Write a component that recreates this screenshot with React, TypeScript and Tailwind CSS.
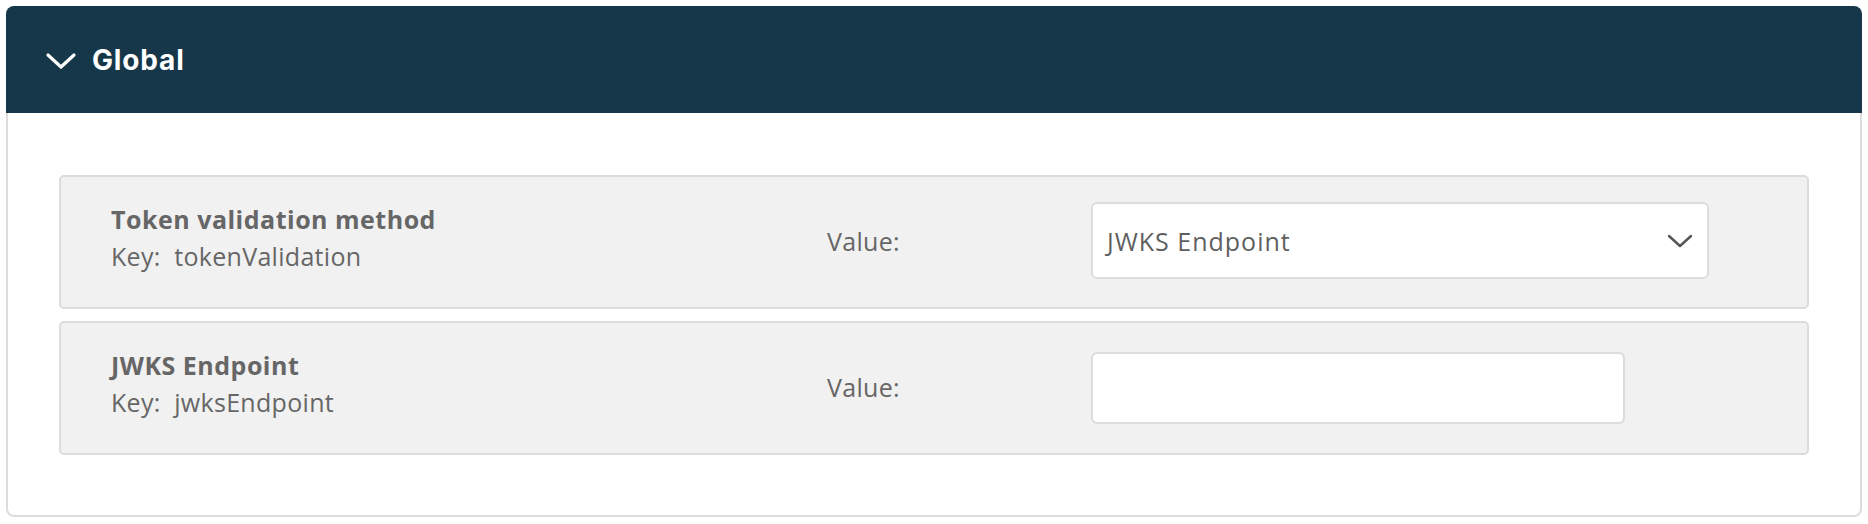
import React from "react";

function Row({ title, keyName, children }: { title: string; keyName: string; children: React.ReactNode }) {
  return (
    <div className="flex h-[134px] items-center rounded-[5px] border-2 border-[#dcdcdc] bg-[#f1f1f1] pl-[50px]">
      <div className="flex w-[716px] flex-col pb-[10px]">
        <div className="text-[25px] font-bold leading-[34px] tracking-[0.5px] text-[#666666]">{title}</div>
        <div className="mt-[3px] text-[25px] leading-[34px] tracking-[0.3px] text-[#666666]">
          Key:&nbsp; {keyName}
        </div>
      </div>
      <div className="w-[264px] pb-[3px] text-[25px] leading-[34px] tracking-[0.3px] text-[#666666]">Value:</div>
      {children}
    </div>
  );
}

export default function App() {
  return (
    <div
      className="bg-white p-[6px]"
      style={{ fontFamily: '"Open Sans", "Noto Sans", sans-serif' }}
    >
      <div className="flex h-[107px] items-center gap-[15px] rounded-t-[8px] bg-[#16374a] pl-[39px]">
        <svg width="32" height="18" viewBox="0 0 32 18" fill="none" className="mt-[2px]">
          <path d="M3 3 L16 15 L29 3" stroke="#ffffff" strokeWidth="3.2" strokeLinecap="round" strokeLinejoin="round" />
        </svg>
        <div
          className="text-[28px] font-bold tracking-[0.03em] text-white"
          style={{ fontFamily: 'Inter, "Noto Sans", sans-serif' }}
        >
          Global
        </div>
      </div>
      <div className="flex flex-col gap-[12px] rounded-b-[8px] border-x-2 border-b-2 border-[#dddddd] px-[51px] pb-[60px] pt-[62px]">
        <Row title="Token validation method" keyName="tokenValidation">
          <div className="mb-[3px] flex h-[77px] w-[618px] items-center justify-between rounded-[6px] border-2 border-[#dcdcdc] bg-white pl-[14px] pr-[14px]">
            <span className="text-[25px] leading-[34px] tracking-[1px] text-[#5f5f5f]">JWKS Endpoint</span>
            <svg width="26" height="16" viewBox="0 0 26 16" fill="none">
              <path d="M2 3 L13 13 L24 3" stroke="#555555" strokeWidth="2.4" strokeLinecap="round" strokeLinejoin="round" />
            </svg>
          </div>
        </Row>
        <Row title="JWKS Endpoint" keyName="jwksEndpoint">
          <div className="h-[72px] w-[534px] rounded-[6px] border-2 border-[#dcdcdc] bg-white" />
        </Row>
      </div>
    </div>
  );
}
